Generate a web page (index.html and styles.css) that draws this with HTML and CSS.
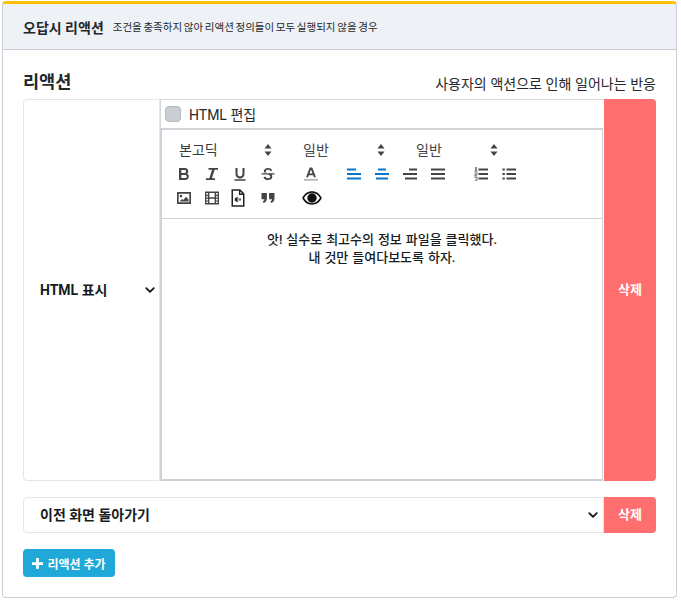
FILE: index.html
```html
<!DOCTYPE html>
<html lang="ko">
<head>
<meta charset="utf-8">
<title>오답시 리액션</title>
<link rel="stylesheet" href="styles.css">
</head>
<body>
<section class="card">
  <header class="card-head">
    <strong class="head-title">오답시 리액션</strong>
    <span class="head-sub">조건을 충족하지 않아 리액션 정의들이 모두 실행되지 않을 경우</span>
  </header>
  <div class="card-body">
    <div class="title-row">
      <h2 class="title">리액션</h2>
      <span class="title-note">사용자의 액션으로 인해 일어나는 반응</span>
    </div>
    <div class="reaction">
      <div class="type-cell">
        <select class="select select-type"><option>HTML 표시</option></select>
      </div>
      <div class="edit-cell">
        <label class="check-row"><span class="check"></span><span>HTML 편집</span></label>
        <div class="editor">
          <div class="toolbar">
            <div class="tool-row">
              <span class="drop drop-a">본고딕<svg class="updown" viewBox="0 0 8 12"><path d="M4 0l3.500 4.600h-7zM4 12L.5 7.400h7z"/></svg></span>
              <span class="drop drop-b">일반<svg class="updown" viewBox="0 0 8 12"><path d="M4 0l3.500 4.600h-7zM4 12L.5 7.400h7z"/></svg></span>
              <span class="drop drop-c">일반<svg class="updown" viewBox="0 0 8 12"><path d="M4 0l3.500 4.600h-7zM4 12L.5 7.400h7z"/></svg></span>
            </div>
            <div class="tool-row icons">
              <svg class="ic g1" viewBox="0 0 14 14"><path fill-rule="evenodd" d="M2 1h6a3.300 3.300 0 0 1 2.300 5.700A3.400 3.400 0 0 1 8.600 13H2zM4.300 3v2.900h3.400a1.450 1.450 0 0 0 0-2.900zm0 4.900V11h4a1.550 1.550 0 0 0 0-3.100z"/></svg>
              <svg class="ic g1" viewBox="0 0 14 14"><path d="M3.500 1h9.500v1.800H9.600L7 11.200h3V13H1v-1.800h3.400L7 2.800H3.500z"/></svg>
              <svg class="ic g1" viewBox="0 0 14 14"><path d="M2.500 1h2v6a2.500 2.500 0 0 0 5 0V1h2v6a4.500 4.500 0 0 1-9 0zM1.500 12.300h11v1.500h-11z"/></svg>
              <svg class="ic g2" viewBox="0 0 14 14"><path d="M7 1c2 0 3.600.8 4.200 2.500L9.400 4.200C9 3.300 8.200 2.800 7 2.800c-1.300 0-2.200.6-2.200 1.400 0 .6.400 1 1 1.300H3.300a3 3 0 0 1-.5-1.300C2.800 2.400 4.600 1 7 1zM.5 6.300h13v1.200h-3a3 3 0 0 1 .8 2.200C11.300 11.800 9.400 13 7 13c-2.300 0-4-.9-4.600-2.800l1.800-.6C4.600 10.700 5.600 11.200 7 11.200s2.300-.6 2.300-1.500c0-1-.9-1.700-2.300-2.200H.5z"/></svg>
              <svg class="ic g3" viewBox="0 0 14 14"><path fill-rule="evenodd" d="M5.800 .5h2.400l3.800 9.800h-2.100l-.7-2H4.800l-.7 2H2zM5.500 6.500h3L7 2.600z"/><rect class="ic-grey" x="0" y="11.800" width="14" height="2"/></svg>
              <svg class="ic g4 blue" viewBox="0 0 14 14"><path d="M0 1.500h9v2H0zM0 6h14v2H0zM0 10.500h14v2H0z"/></svg>
              <svg class="ic g5 blue" viewBox="0 0 14 14"><path d="M3 1.500h8v2H3zM0 6h14v2H0zM1 10.500h12v2H1z"/></svg>
              <svg class="ic g5" viewBox="0 0 14 14"><path d="M6 1.500h8v2H6zM0 6h14v2H0zM2 10.500h12v2H2z"/></svg>
              <svg class="ic g5" viewBox="0 0 14 14"><path d="M0 1.500h14v2H0zM0 6h14v2H0zM0 10.500h14v2H0z"/></svg>
              <svg class="ic g6" viewBox="0 0 14 14"><path d="M4.500 1.500H14v2H4.500zM4.500 6H14v2H4.500zM4.500 10.500H14v2H4.500zM1 .3h1.600v3.400h1v.8H.4v-.8h1V1.200H1z"/><path d="M.5 5.500h3v2l-2 1h2v.9H.4V7.800l2.100-1.200H.5zM.5 10h3v3.800h-3V13h2v-.6h-1v-.7h1v-.8h-2z" opacity=".7"/></svg>
              <svg class="ic g7" viewBox="0 0 14 14"><path d="M4.500 1.500H14v2H4.500zM4.500 6H14v2H4.500zM4.500 10.500H14v2H4.500zM.5 1.500h2.300v2H.5zM.5 6h2.300v2H.5zM.5 10.500h2.300v2H.5z"/></svg>
            </div>
            <div class="tool-row icons">
              <svg class="ic g1" viewBox="0 0 14 14"><path fill-rule="evenodd" d="M0 1h14v12H0zM1.700 2.700v8.600h10.600V2.700zM4 3.800a1.300 1.300 0 1 1 0 2.600 1.300 1.300 0 0 1 0-2.600zM2.500 10.400l2.500-2.500 1.200 1 3-3.100 2.300 2.600v2z"/></svg>
              <svg class="ic film" viewBox="0 0 14 14"><path fill-rule="evenodd" d="M0 .5h14v13H0zM1.300 1.900v1.900h1.600V1.900zm0 3.100v1.600h1.600V5zm0 2.800v1.600h1.600V7.800zm0 2.800v1.500h1.600v-1.500zM11.100 1.900v1.900h1.600V1.900zm0 3.100v1.600h1.600V5zm0 2.800v1.600h1.600V7.800zm0 2.800v1.500h1.600v-1.500zM4.400 1.900v4.400h5.200V1.900zm0 5.800v4.400h5.200V7.700z"/></svg>
              <svg class="ic tall" viewBox="0 0 14 18"><path fill-rule="evenodd" d="M.5.300h8.700l4.300 4.300v13.100H.5zM2 1.800v14.400h10V6H7.900V1.800zM9.300 2.500v2.100h2.100z"/><path d="M3.800 9.500l2.800-2v6l-2.800-2zM7.700 8.500c1.400.9 1.400 3.100 0 4zM9.300 9c1.200.7 1.200 2.300 0 3z"/></svg>
              <svg class="ic quote" viewBox="0 0 14 14"><path d="M.5 2h5.400v5.300C5.900 9.800 4.800 11.400 2.700 12l-1-1.500c1.200-.4 1.700-1.200 1.700-2.200H.5zM8.100 2h5.400v5.300c0 2.500-1.100 4.100-3.200 4.700l-1-1.500c1.200-.4 1.700-1.200 1.700-2.200H8.100z"/></svg>
              <svg class="eye" viewBox="0 0 20 14"><path fill-rule="evenodd" d="M10 .3c4.300 0 7.900 2.600 9.800 6.700-1.900 4.100-5.500 6.700-9.800 6.700S2.100 11.100.2 7C2.100 2.900 5.700.3 10 .3zM2 7c1.700 3.100 4.700 5.200 8 5.200s6.300-2.100 8-5.200c-1.700-3.100-4.700-5.200-8-5.200S3.700 3.900 2 7zM10 2.300a4.700 4.700 0 1 1 0 9.400 4.700 4.700 0 0 1 0-9.400z"/></svg>
            </div>
          </div>
          <div class="editor-text">
            <p>앗! 실수로 최고수의 정보 파일을 클릭했다.</p>
            <p>내 것만 들여다보도록 하자.</p>
          </div>
        </div>
      </div>
      <button class="del del-tall" type="button">삭제</button>
    </div>
    <div class="reaction-simple">
      <select class="select select-wide"><option>이전 화면 돌아가기</option></select>
      <button class="del del-short" type="button">삭제</button>
    </div>
    <button class="add" type="button"><svg class="plus" viewBox="0 0 12 12"><path d="M4.500 0h3v4.500H12v3H7.500V12h-3V7.500H0v-3h4.500z"/></svg>리액션 추가</button>
  </div>
</section>
</body>
</html>
```

FILE: styles.css
```css
* { box-sizing: border-box; }
html, body { height: 100%; }
body {
  margin: 0;
  padding: 1px 4px 3px 2px;
  background: #fff;
  color: #212529;
  font-family: Roboto, "Noto Sans CJK KR", sans-serif;
  font-size: 14px;
}
.card {
  height: 597px;
  border: 1px solid #c8ced3;
  border-top: 3px solid #ffc107;
  border-radius: 4px;
  display: flex;
  flex-direction: column;
}
.card-head {
  height: 46px;
  flex: none;
  background: #eef1f5;
  border-bottom: 1px solid #c8ced3;
  padding: 0 20px;
  display: flex;
  align-items: center;
  gap: 9px;
}
.head-title { font-size: 14px; font-weight: 700; color: #23282c; }
.head-sub { font-size: 10.500px; word-spacing: -0.9px; color: #23282c; }
.card-body { flex: 1; padding: 20px 20px 0 20px; }
.title-row {
  display: flex;
  justify-content: space-between;
  align-items: flex-end;
  height: 29px;
  padding-bottom: 5px;
}
.title { margin: 0; font-size: 17.500px; font-weight: 700; line-height: 24px; color: #23282c; }
.title-note { font-size: 14px; word-spacing: .2px; color: #23282c; line-height: 20px; }
.reaction { display: flex; height: 382px; }
.type-cell { width: 137px; flex: none; }
.select {
  appearance: none;
  font-family: inherit;
  font-weight: 700;
  color: #151b1e;
  background: #fff url("data:image/svg+xml,%3Csvg xmlns='http://www.w3.org/2000/svg' viewBox='0 0 16 16'%3E%3Cpath fill='none' stroke='%23151b1e' stroke-width='3' stroke-linecap='round' stroke-linejoin='round' d='M2 5l6 6 6-6'/%3E%3C/svg%3E") no-repeat right 4px center / 10px 10px;
  border: 1px solid #e4e7ea;
  outline: none;
}
.select-type {
  width: 100%;
  height: 100%;
  font-size: 14px;
  padding: 0 16px;
  border-radius: 4px 0 0 4px;
}
.edit-cell { flex: 1; min-width: 0; display: flex; flex-direction: column; }
.check-row {
  height: 29px;
  flex: none;
  display: flex;
  align-items: center;
  gap: 8px;
  padding-left: 4px;
  border-top: 1px solid #d5d8da;
  border-left: 1px solid #d5d8da;
  font-size: 14px;
  color: #23282c;
}
.check {
  width: 16px;
  height: 16px;
  background: #c8ced3;
  border: 1px solid #b4bac0;
  border-radius: 4px;
}
.editor {
  flex: 1;
  margin-right: 1px;
  border: 2px solid #cfd2d6;
  border-right-width: 1px;
  display: flex;
  flex-direction: column;
}
.toolbar {
  height: 89px;
  flex: none;
  border-bottom: 1px solid #d3d3d3;
  padding: 10px 0 0 15px;
  color: #444;
}
.tool-row { display: flex; align-items: center; height: 20px; margin-bottom: 4px; }
.drop {
  display: flex;
  align-items: center;
  justify-content: space-between;
  font-size: 14px;
  line-height: 20px;
  color: #444;
}
.drop-a { width: 95px; padding-left: 2px; color: #3a3a3a; margin-right: 30px; }
.drop-b { width: 83px; padding-left: 1px; margin-right: 30px; }
.drop-c { width: 83px; padding-left: 1px; }
.updown { width: 8px; height: 12px; fill: #444; }
.ic { width: 14px; height: 14px; flex: none; fill: #444; }
.ic.tall { width: 14px; height: 18px; fill: #222; margin-right: 16px; }
.ic.blue { fill: #0a75c9; }
.ic-grey { fill: #bbb; }
.icons .ic.g1 { margin-right: 14px; }
.icons .ic.film { margin-right: 12px; }
.icons .ic.g2 { margin-right: 29px; }
.icons .ic.g3 { margin-right: 29px; }
.icons .ic.g4, .icons .ic.g5 { margin-right: 14px; }
.icons .ic.g5:nth-of-type(9) { margin-right: 29px; }
.icons .ic.g6 { margin-right: 14px; }
.icons .ic.quote { margin-right: 27px; }
.eye { width: 20px; height: 14px; fill: #111; }
.editor-text {
  flex: 1;
  padding-top: 12px;
  text-align: center;
  font-size: 13px;
  word-spacing: .7px;
  font-weight: 500;
  line-height: 18px;
  color: #151b1e;
}
.editor-text p { margin: 0; }
.del {
  border: 0;
  background: #ff6f6f;
  color: #fff;
  font-family: inherit;
  font-size: 13px;
  font-weight: 700;
  width: 52px;
  padding: 0 0 4px;
  flex: none;
}
.del-tall { border-radius: 0 4px 4px 0; }
.del-short { border-radius: 0 4px 4px 0; }
.reaction-simple { display: flex; height: 36px; margin-top: 16px; }
.select-wide {
  flex: 1;
  min-width: 0;
  font-size: 14px;
  padding: 0 16px;
  border-radius: 4px 0 0 4px;
  background-position: right 5px center;
}
.add {
  margin-top: 16px;
  width: 92px;
  height: 28px;
  border: 0;
  border-radius: 4px;
  background: #20a8d8;
  color: #fff;
  font-family: inherit;
  font-size: 12px;
  font-weight: 700;
  display: flex;
  align-items: center;
  justify-content: center;
  gap: 4px;
  padding: 0;
}
.plus { width: 11px; height: 11px; fill: #fff; }
```
